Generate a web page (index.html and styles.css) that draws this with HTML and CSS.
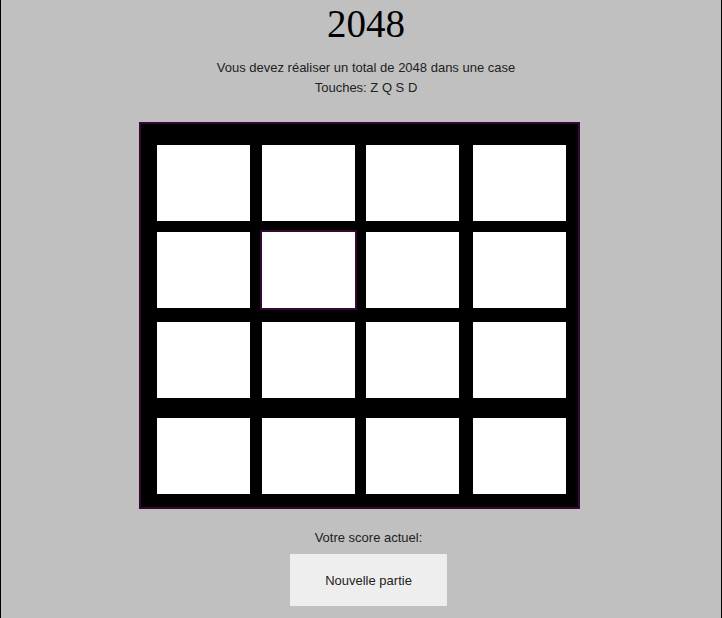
FILE: index.html
```html
<!DOCTYPE html>
<html lang="fr">
<head>
<meta charset="utf-8">
<title>2048</title>
<link rel="stylesheet" href="styles.css">
</head>
<body>
<header class="intro">
  <h1 class="title">2048</h1>
  <p class="rules">Vous devez réaliser un total de 2048 dans une case<br>Touches: Z Q S D</p>
</header>
<main class="board">
  <div class="tile"></div><div class="tile"></div><div class="tile"></div><div class="tile"></div>
  <div class="tile"></div><div class="tile tile-active"></div><div class="tile"></div><div class="tile"></div>
  <div class="tile"></div><div class="tile"></div><div class="tile"></div><div class="tile"></div>
  <div class="tile"></div><div class="tile"></div><div class="tile"></div><div class="tile"></div>
</main>
<footer class="controls">
  <p class="score">Votre score actuel:</p>
  <button class="new-game" type="button">Nouvelle partie</button>
</footer>
</body>
</html>
```
FILE: styles.css
```css
html, body {
  margin: 0;
  padding: 0;
}
body {
  background: #c0c0c0;
  border-left: 1px solid #000;
  border-right: 1px solid #000;
  min-height: 100vh;
  box-sizing: border-box;
  font-family: "Liberation Sans", Arial, sans-serif;
  color: #222;
}
.intro {
  padding-left: 10px;
  text-align: center;
}
.title {
  margin: 1px 0 0;
  font-family: "Liberation Serif", "Times New Roman", serif;
  font-weight: normal;
  font-size: 39px;
  line-height: 46px;
  color: #000;
}
.rules {
  margin: 11px 0 0;
  font-size: 13px;
  line-height: 20px;
}
.board {
  box-sizing: border-box;
  width: 441px;
  margin: 24px 0 0 138px;
  padding: 21px 12px 13px 16px;
  background: #000;
  border: 2px solid #360636;
  display: grid;
  grid-template-columns: 105px 104px 107px 93px;
  grid-template-rows: 87px 90px 96px 76px;
}
.tile {
  width: 93px;
  height: 76px;
  background: #fff;
}
.tile-active {
  outline: 2px solid #360636;
}
.controls {
  padding-left: 15px;
  text-align: center;
}
.score {
  margin: 19px 0 0;
  font-size: 13px;
  line-height: 20px;
}
.new-game {
  margin-top: 6px;
  width: 157px;
  height: 52px;
  border: none;
  background: #eeeeee;
  font-family: "Liberation Sans", Arial, sans-serif;
  font-size: 13px;
  color: #222;
  padding: 0;
}
```
